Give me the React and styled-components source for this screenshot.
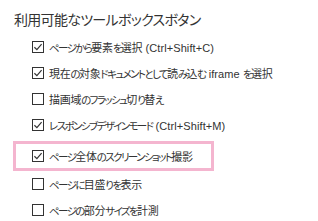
import React from "react";
import styled, { createGlobalStyle } from "styled-components";

const GlobalStyle = createGlobalStyle`
  body {
    margin: 0;
    background: #fff;
    font-family: "Noto Sans CJK JP", "Noto Sans", sans-serif;
    font-feature-settings: "palt";
    color: #333;
  }
`;

const Panel = styled.div`
  width: 318px;
  height: 221px;
  overflow: hidden;
  padding-top: 9px;
  box-sizing: border-box;
`;

const Heading = styled.h2`
  margin: 0 0 5px 14px;
  font-size: 14px;
  font-weight: 400;
  line-height: 20px;
  color: #333;
  letter-spacing: -0.7px;
`;

const List = styled.div`
  display: flex;
  flex-direction: column;
  padding-left: 13px;
`;

const Row = styled.label`
  display: flex;
  align-items: center;
  gap: 5px;
  height: ${(p) => (p.$highlight ? "30px" : "26px")};
  box-sizing: border-box;
  padding-left: ${(p) => (p.$highlight ? "16px" : "19px")};
  border: ${(p) => (p.$highlight ? "3px solid #f4b5cf" : "none")};
  margin-top: ${(p) => (p.$highlight ? "3px" : "0")};
  width: ${(p) => (p.$highlight ? "201px" : "auto")};
  font-family: "Liberation Sans", "Noto Sans CJK JP", sans-serif;
  font-size: 11px;
  color: #333;
  white-space: nowrap;
`;

const Kana = styled.span`
  font-size: 10.5px;
  letter-spacing: -1.6px;
`;

const Kanji = styled.span`
  letter-spacing: -0.3px;
`;

const Latin = styled.span`
  letter-spacing: 0.1px;
`;

const Box = styled.svg`
  flex: none;
  width: 12px;
  height: 12px;
`;

const Checkbox = ({ checked }) => (
  <Box viewBox="0 0 12 12">
    <rect x="0.5" y="0.5" width="11" height="11" fill="#fff" stroke="#333" strokeWidth="1" />
    {checked && (
      <path d="M2.4 6.2 L4.9 8.6 L9.6 3.2" fill="none" stroke="#333" strokeWidth="1.2" />
    )}
  </Box>
);

// split a label into kana, kanji and latin runs so each can get its own spacing
const Label = ({ text }) => {
  const runs = text.match(/[\u3040-\u30ff]+|[\u4e00-\u9fff]+|[^\u3040-\u30ff\u4e00-\u9fff]+/g) || [];
  return (
    <span>
      {runs.map((r, i) => {
        if (/[\u3040-\u30ff]/.test(r)) return <Kana key={i}>{r}</Kana>;
        if (/[\u4e00-\u9fff]/.test(r)) return <Kanji key={i}>{r}</Kanji>;
        return <Latin key={i}>{r}</Latin>;
      })}
    </span>
  );
};

const options = [
  { label: "ページから要素を選択 (Ctrl+Shift+C)", checked: true },
  { label: "現在の対象ドキュメントとして読み込む iframe を選択", checked: true },
  { label: "描画域のフラッシュ切り替え", checked: false },
  { label: "レスポンシブデザインモード (Ctrl+Shift+M)", checked: true },
  { label: "ページ全体のスクリーンショット撮影", checked: true, highlight: true },
  { label: "ページに目盛りを表示", checked: false },
  { label: "ページの部分サイズを計測", checked: false },
];

const App = () => {
  return (
    <Panel>
      <GlobalStyle />
      <Heading>利用可能なツールボックスボタン</Heading>
      <List>
        {options.map((o) => (
          <Row key={o.label} $highlight={o.highlight}>
            <Checkbox checked={o.checked} />
            <Label text={o.label} />
          </Row>
        ))}
      </List>
    </Panel>
  );
};

export default App;
